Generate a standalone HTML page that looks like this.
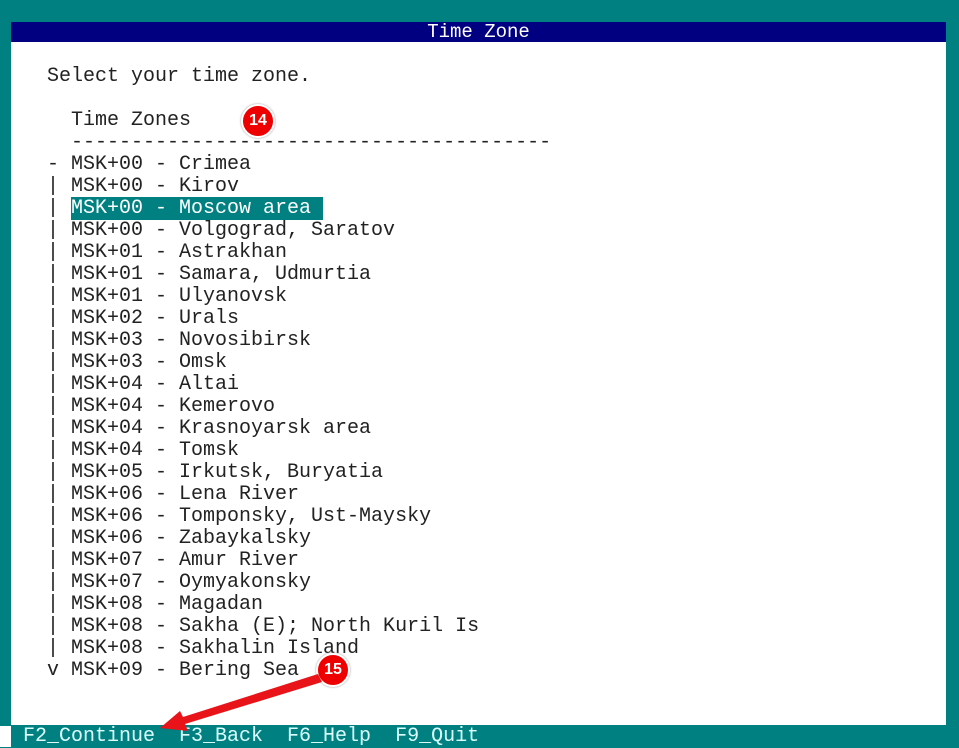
<!DOCTYPE html>
<html><head><style>
body{margin:0;width:959px;height:747px;background:#008080;position:relative;overflow:hidden;font-family:"Liberation Mono",monospace;font-size:20px}
#panel{position:absolute;left:11px;top:22px;width:935px;height:703px;background:#fff}
#title{position:absolute;left:11px;top:22px;width:935px;height:20px;background:#000080;color:#fff;text-align:center;line-height:20px;font-size:19px}
pre{position:absolute;left:11px;top:66px;margin:0;font:20px/22px "Liberation Mono",monospace;color:#222}
.hl{background:#008080;color:#fff}
#bar{position:absolute;left:11px;top:726px;width:948px;height:21px;background:#008080;color:#dff;line-height:21px;font-size:20px;white-space:pre}
#wl{position:absolute;left:0;top:726px;width:11px;height:21px;background:#fff}
.b{position:absolute;width:30px;height:30px;border-radius:50%;background:#e00;border:2px solid #fff;box-shadow:0 0 2px #999;color:#fff;font:bold 16px/30px "Liberation Sans",sans-serif;text-align:center}
</style></head><body>
<div id="panel"></div>
<div id="title">Time Zone</div>
<pre>   Select your time zone.

     Time Zones
     ----------------------------------------
   - MSK+00 - Crimea
   | MSK+00 - Kirov
   | <span class="hl">MSK+00 - Moscow area </span>
   | MSK+00 - Volgograd, Saratov
   | MSK+01 - Astrakhan
   | MSK+01 - Samara, Udmurtia
   | MSK+01 - Ulyanovsk
   | MSK+02 - Urals
   | MSK+03 - Novosibirsk
   | MSK+03 - Omsk
   | MSK+04 - Altai
   | MSK+04 - Kemerovo
   | MSK+04 - Krasnoyarsk area
   | MSK+04 - Tomsk
   | MSK+05 - Irkutsk, Buryatia
   | MSK+06 - Lena River
   | MSK+06 - Tomponsky, Ust-Maysky
   | MSK+06 - Zabaykalsky
   | MSK+07 - Amur River
   | MSK+07 - Oymyakonsky
   | MSK+08 - Magadan
   | MSK+08 - Sakha (E); North Kuril Is
   | MSK+08 - Sakhalin Island
   v MSK+09 - Bering Sea</pre>
<div id="wl"></div>
<div id="bar"> F2_Continue  F3_Back  F6_Help  F9_Quit</div>
<div class="b" style="left:241px;top:104px">14</div>
<div class="b" style="left:316px;top:653px">15</div>
<svg style="position:absolute;left:0;top:0" width="959" height="747">
<polygon points="318,674 322,682 185,724 188,731 160,728 180,711 183,717" fill="#e8141a"/>
</svg>
</body></html>
